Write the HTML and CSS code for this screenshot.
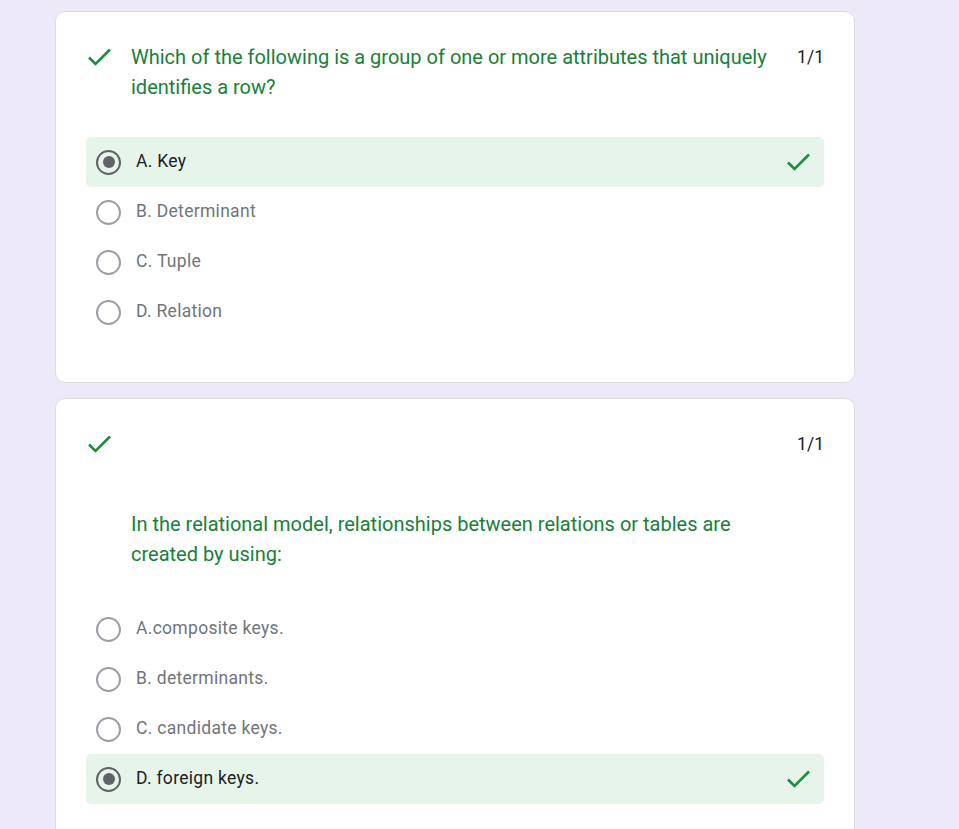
FILE: index.html
```html
<!DOCTYPE html>
<html>
<head>
<meta charset="utf-8">
<link rel="stylesheet" href="styles.css">
</head>
<body>
<div class="page">
  <div class="card">
    <div class="qhead">
      <svg class="qcheck" width="26" height="24" viewBox="0 0 26 24"><polyline points="3,12.5 9.5,19 24,4.5" fill="none" stroke="#1e8e3e" stroke-width="2.6"/></svg>
      <div class="qtitle">Which of the following is a group of one or more attributes that uniquely identifies a row?</div>
      <div class="score">1/1</div>
    </div>
    <div class="options">
      <div class="opt sel"><span class="radio on"></span><span class="label">A. Key</span><svg class="ocheck" width="26" height="24" viewBox="0 0 26 24"><polyline points="3,12.5 9.5,19 24,4.5" fill="none" stroke="#1e8e3e" stroke-width="2.6"/></svg></div>
      <div class="opt"><span class="radio"></span><span class="label">B. Determinant</span></div>
      <div class="opt"><span class="radio"></span><span class="label">C. Tuple</span></div>
      <div class="opt"><span class="radio"></span><span class="label">D. Relation</span></div>
    </div>
  </div>
  <div class="card">
    <div class="qhead">
      <svg class="qcheck" width="26" height="24" viewBox="0 0 26 24"><polyline points="3,12.5 9.5,19 24,4.5" fill="none" stroke="#1e8e3e" stroke-width="2.6"/></svg>
      <div class="qtitle"></div>
      <div class="score">1/1</div>
    </div>
    <div class="qtitle sub">In the relational model, relationships between relations or tables are created by using:</div>
    <div class="options">
      <div class="opt"><span class="radio"></span><span class="label">A.composite keys.</span></div>
      <div class="opt"><span class="radio"></span><span class="label">B. determinants.</span></div>
      <div class="opt"><span class="radio"></span><span class="label">C. candidate keys.</span></div>
      <div class="opt sel"><span class="radio on"></span><span class="label">D. foreign keys.</span><svg class="ocheck" width="26" height="24" viewBox="0 0 26 24"><polyline points="3,12.5 9.5,19 24,4.5" fill="none" stroke="#1e8e3e" stroke-width="2.6"/></svg></div>
    </div>
  </div>
</div>
</body>
</html>
```
FILE: styles.css
```css
html, body {
  margin: 0;
  padding: 0;
  background: #eee9f8;
  font-family: Roboto, "Liberation Sans", sans-serif;
}
.page {
  padding: 11px 0 0 55px;
  display: flex;
  flex-direction: column;
  gap: 15px;
}
.card {
  width: 800px;
  box-sizing: border-box;
  background: #fff;
  border: 1px solid #dadce0;
  border-radius: 10px;
  padding: 30px 30px 45px 30px;
}
.qhead {
  display: flex;
  align-items: flex-start;
}
.qcheck {
  flex: none;
  margin: 3px 19px 0 0;
}
.qtitle {
  flex: 1;
  font-size: 20px;
  line-height: 30px;
  color: #188038;
  min-height: 30px;
}
.qtitle.sub {
  margin: 50px 0 0 45px;
  width: 620px;
}
.score {
  flex: none;
  margin-left: 24px;
  font-size: 17.5px;
  line-height: 30px;
  color: #202124;
}
.options {
  margin-top: 35px;
  display: flex;
  flex-direction: column;
}
.opt {
  height: 50px;
  display: flex;
  align-items: center;
  padding: 0 13px 0 10px;
  border-radius: 5px;
}
.opt.sel {
  background: #e6f4ea;
}
.radio {
  width: 25px;
  height: 25px;
  box-sizing: border-box;
  border: 2px solid #9aa0a6;
  border-radius: 50%;
  flex: none;
  display: flex;
  align-items: center;
  justify-content: center;
}
.radio.on {
  border: 2.5px solid #5f6368;
}
.radio.on::after {
  content: "";
  width: 12px;
  height: 12px;
  border-radius: 50%;
  background: #5f6368;
}
.label {
  margin-left: 15px;
  font-size: 17.5px;
  letter-spacing: 0.3px;
  line-height: 24px;
  padding-bottom: 2px;
  color: #70757a;
  flex: 1;
}
.opt.sel .label {
  color: #202124;
}
.ocheck {
  flex: none;
}
```
